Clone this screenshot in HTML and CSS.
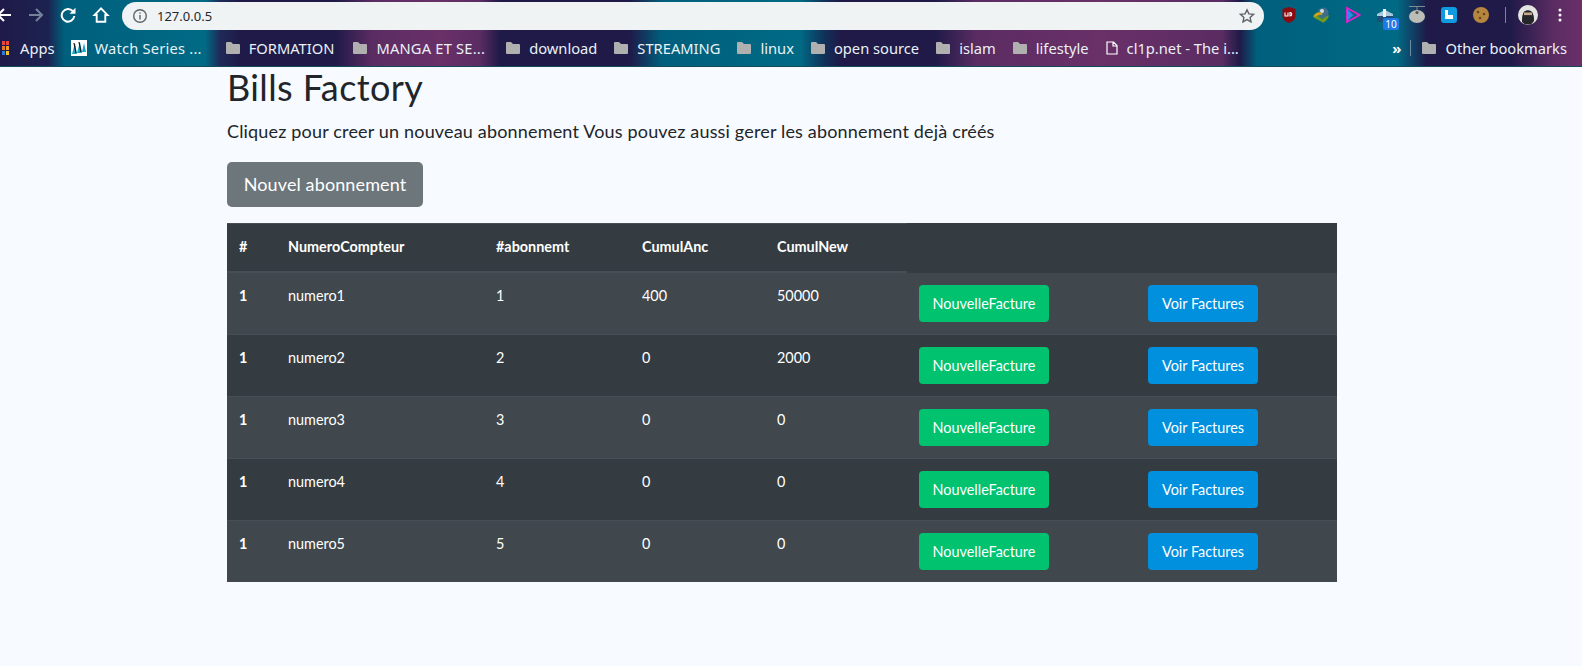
FILE: index.html
```html
<!DOCTYPE html>
<html lang="fr">
<head>
<meta charset="utf-8">
<title>Bills Factory</title>
<link rel="stylesheet" href="styles.css">
</head>
<body>
<svg class="defs" width="0" height="0"><symbol id="folder" viewBox="0 0 14 12"><path d="M1 0h4l2 2h6a1 1 0 0 1 1 1v8a1 1 0 0 1-1 1H1a1 1 0 0 1-1-1V1a1 1 0 0 1 1-1z" fill="#b0b0b0"/></symbol></svg>
<header class="chrome">
  <div class="toolbar">
    <svg class="nav nav-back" width="16" height="16" viewBox="0 0 16 16"><path d="M15 8H2M8 2 2 8l6 6" fill="none" stroke="#fff" stroke-width="2"/></svg>
    <svg class="nav nav-fwd" width="16" height="16" viewBox="0 0 16 16"><path d="M1 8h13M8 2l6 6-6 6" fill="none" stroke="#74839a" stroke-width="2"/></svg>
    <svg class="nav nav-reload" width="16" height="16" viewBox="0 0 16 16"><path d="M12.800 4.200A6.300 6.300 0 1 0 14.300 9" fill="none" stroke="#fff" stroke-width="2"/><path d="M9.500 6.800H15.500V0.800z" fill="#fff"/></svg>
    <svg class="nav nav-home" width="18" height="18" viewBox="0 0 18 18"><path d="M9 2.300 2.500 9H4.700V15.700H13.300V9H15.500Z" fill="none" stroke="#fff" stroke-width="1.900"/></svg>
    <div class="omnibox">
      <svg class="info" width="16" height="16" viewBox="0 0 16 16"><circle cx="8" cy="8" r="6.300" fill="none" stroke="#5f6368" stroke-width="1.400"/><path d="M7.300 7h1.400v4.500H7.300zM7.300 4.400h1.400v1.400H7.300z" fill="#5f6368"/></svg>
      <span class="url">127.0.0.5</span>
      <svg class="star" width="16" height="16" viewBox="0 0 16 16"><path d="m8 1.800 1.900 4.100 4.500.5-3.300 3 .9 4.400L8 11.600l-4 2.200.9-4.400-3.300-3 4.500-.5z" fill="none" stroke="#5f6368" stroke-width="1.400"/></svg>
    </div>
    <div class="extensions">
      <svg width="18" height="18" viewBox="0 0 18 18"><path d="M2.500 3 9 1l6.500 2v7c0 3.500-3.500 6-6.500 7-3-1-6.500-3.500-6.500-7z" fill="#8a0c10"/><path d="M5 6.500v3.500h3V6.500M10 6.500v3.500c2.300 0 2.300-3.500 0-3.500z" fill="none" stroke="#fff" stroke-width="1.100"/></svg>
      <svg width="18" height="18" viewBox="0 0 18 18"><circle cx="11" cy="7" r="5.500" fill="#3f6d8a"/><circle cx="10" cy="5" r="2" fill="#cfe0ea"/><path d="M1 11c1-5 7-6 10-3L6 10l4 3 7-4c-1 5-5 8-6.500 7.500C7.500 14.500 4 13 1 11z" fill="#6b9a1f"/><path d="M2.500 10.500c2-2.500 5-3.500 7.500-2.500" fill="none" stroke="#e8a020" stroke-width="1.800"/></svg>
      <svg width="18" height="18" viewBox="0 0 18 18"><path d="M3 2l12.500 7L3 16z" fill="none" stroke="#e81fd0" stroke-width="1.800"/><path d="M3 3v12l6.500-6z" fill="#2d8ae8"/></svg>
      <span class="ext-badge-wrap">
        <svg width="18" height="18" viewBox="0 0 18 18"><path d="M1 8 9 4l8 4v2H1z" fill="#a9c9dc"/><rect x="1" y="10" width="16" height="6" fill="#1f4f78"/><rect x="7" y="3" width="3" height="8" fill="#eef2f4"/></svg>
        <span class="ext-badge">10</span>
      </span>
      <svg width="18" height="18" viewBox="0 0 18 18"><path d="M1 0.500h16" stroke="#7f8c8f"/><path d="M9 0.500v5" stroke="#7f8c8f"/><ellipse cx="9" cy="10.500" rx="8" ry="6.500" fill="#bdbdb8"/><circle cx="9" cy="6.500" r="1.600" fill="#555"/></svg>
      <svg width="18" height="18" viewBox="0 0 18 18"><rect x="1" y="1" width="16" height="16" rx="3" fill="#0f9be0"/><path d="M5 4h3v5h5v4H5z" fill="#fff"/></svg>
      <svg width="18" height="18" viewBox="0 0 18 18"><circle cx="9" cy="9" r="8" fill="#b5863f"/><circle cx="6" cy="6" r="1.300" fill="#6c451b"/><circle cx="12" cy="8" r="1.300" fill="#6c451b"/><circle cx="8" cy="12" r="1.300" fill="#6c451b"/></svg>
    </div>
    <span class="vsep"></span>
    <svg class="avatar" width="20" height="20" viewBox="0 0 20 20"><circle cx="10" cy="10" r="10" fill="#e4e4e2"/><path d="M4 17c0-4 0-6 1-8 1-5 9-5 10 0 1 2 1 4 1 7l-3 3.500H7z" fill="#24262a"/><rect x="6" y="7.500" width="8" height="2.600" fill="#c9a88c"/></svg>
    <svg class="menu" width="4" height="14" viewBox="0 0 4 14"><circle cx="2" cy="2" r="1.500" fill="#fff"/><circle cx="2" cy="7" r="1.500" fill="#fff"/><circle cx="2" cy="12" r="1.500" fill="#fff"/></svg>
  </div>
  <nav class="bookmarks">
    <span class="apps"><i></i><i></i><i></i><i></i><i></i><i></i></span>
    <span class="bm bm-apps">Apps</span>
    <span class="bm bm-watch"><svg width="16" height="16" viewBox="0 0 16 16"><rect width="16" height="16" fill="#fff"/><path d="M1 14 4 3l2 11zM6 13l3-11 2 11zM11 12l2-9 2 9z" fill="#18a5c8"/><path d="M3 3l2 10M8 2l2 10" stroke="#111" stroke-width="1.200"/></svg>Watch Series ...</span>
    <span class="bm bm-first"><svg class="folder" width="14" height="12"><use href="#folder"/></svg>FORMATION</span>
    <span class="bm bm-manga"><svg class="folder" width="14" height="12"><use href="#folder"/></svg>MANGA ET SE...</span>
    <span class="bm bm-download"><svg class="folder" width="14" height="12"><use href="#folder"/></svg>download</span>
    <span class="bm"><svg class="folder" width="14" height="12"><use href="#folder"/></svg>STREAMING</span>
    <span class="bm"><svg class="folder" width="14" height="12"><use href="#folder"/></svg>linux</span>
    <span class="bm"><svg class="folder" width="14" height="12"><use href="#folder"/></svg>open source</span>
    <span class="bm"><svg class="folder" width="14" height="12"><use href="#folder"/></svg>islam</span>
    <span class="bm"><svg class="folder" width="14" height="12"><use href="#folder"/></svg>lifestyle</span>
    <span class="bm"><svg width="12" height="14" viewBox="0 0 12 14"><path d="M1 1h6.500L11 4.500V13H1zM7 1v4h4" fill="none" stroke="#fff" stroke-width="1.200"/></svg>cl1p.net - The i...</span>
    <span class="chev">»</span>
    <span class="vsep vsep-bm"></span>
    <span class="bm bm-other"><svg class="folder" width="14" height="12"><use href="#folder"/></svg>Other bookmarks</span>
  </nav>
</header>
<main class="container">
  <h1 class="title">Bills Factory</h1>
  <p class="lead">Cliquez pour creer un nouveau abonnement Vous pouvez aussi gerer les abonnement dejà créés</p>
  <a class="btn btn-lg btn-secondary">Nouvel abonnement</a>
  <table class="table">
    <thead>
      <tr><th class="c1">#</th><th class="c2">NumeroCompteur</th><th class="c3">#abonnemt</th><th class="c4">CumulAnc</th><th class="c5">CumulNew</th><th class="c6 noline"></th><th class="c7 noline"></th></tr>
    </thead>
    <tbody>
      <tr class="odd"><th>1</th><td>numero1</td><td>1</td><td>400</td><td>50000</td><td><a class="btn btn-green">NouvelleFacture</a></td><td><a class="btn btn-blue">Voir Factures</a></td></tr>
      <tr><th>1</th><td>numero2</td><td>2</td><td>0</td><td>2000</td><td><a class="btn btn-green">NouvelleFacture</a></td><td><a class="btn btn-blue">Voir Factures</a></td></tr>
      <tr class="odd"><th>1</th><td>numero3</td><td>3</td><td>0</td><td>0</td><td><a class="btn btn-green">NouvelleFacture</a></td><td><a class="btn btn-blue">Voir Factures</a></td></tr>
      <tr><th>1</th><td>numero4</td><td>4</td><td>0</td><td>0</td><td><a class="btn btn-green">NouvelleFacture</a></td><td><a class="btn btn-blue">Voir Factures</a></td></tr>
      <tr class="odd"><th>1</th><td>numero5</td><td>5</td><td>0</td><td>0</td><td><a class="btn btn-green">NouvelleFacture</a></td><td><a class="btn btn-blue">Voir Factures</a></td></tr>
    </tbody>
  </table>
</main>
</body>
</html>
```
FILE: styles.css
```css
* { box-sizing: border-box; }
html, body { margin: 0; height: 100%; overflow: hidden; }
body { background: #f7fafe; font-family: "Lato", "Noto Sans", sans-serif; color: #212529; }
.defs { position: absolute; }

.chrome {
  height: 67px;
  background: linear-gradient(90deg,
    #1f1a48 0, #1c2250 48px, #005f7c 64px, #006a85 205px, #1f2a58 220px, #1f1a48 240px,
    #1f1a48 335px, #5a2c62 372px, #6a3068 440px, #5a2c62 480px, #1f1a48 500px,
    #1f1a48 630px, #005f7c 662px, #006a85 800px, #103058 825px, #1f1a48 840px,
    #1f1a48 935px, #5a2c62 976px, #6a3068 1100px, #5a2c62 1222px, #1f1a48 1240px,
    #005f7c 1257px, #006a85 1397px, #1f1a48 1427px,
    #1f1a48 1510px, #5a2c62 1553px, #6a3068 1582px);
  color: #e9f2f7;
  font-family: "Noto Sans", sans-serif;
  border-bottom: 1px solid #0f4a5e;
}
.toolbar { height: 30px; display: flex; align-items: center; }
.nav { flex: none; }
.nav-back { margin-left: -4px; }
.nav-fwd { margin-left: 16px; }
.nav-reload { margin-left: 16px; }
.nav-home { margin-left: 16px; }
.omnibox {
  margin: 2px 0 0 12px;
  width: 1142px;
  height: 28px;
  background: #eff3f4;
  border-radius: 14px;
  display: flex;
  align-items: center;
  padding: 0 9px 0 10px;
  flex: none;
}
.info, .star { flex: none; }
.url { margin-left: 9px; font-size: 13px; color: #24292e; flex: 1; }
.extensions { display: flex; align-items: center; gap: 14px; margin-left: 16px; flex: none; }
.ext-badge-wrap { position: relative; display: flex; }
.ext-badge {
  position: absolute; left: 7px; top: 12px; width: 16px; height: 12px;
  background: #1f7ae6; color: #fff; font-size: 10px; line-height: 12px; text-align: center; border-radius: 2px;
}
.vsep { width: 1px; height: 16px; background: #6f8aa0; margin-left: 15px; flex: none; }
.avatar { margin-left: 12px; flex: none; }
.menu { margin-left: 20px; flex: none; }

.bookmarks { height: 35px; display: flex; align-items: center; font-size: 14.7px; white-space: nowrap; }
.apps { display: grid; grid-template-columns: repeat(2, 3px); grid-auto-rows: 4px; gap: 1px; margin-left: 2px; flex: none; }
.apps i { display: block; background: #e8453c; }
.apps i:nth-child(3) { background: #e8762c; }
.apps i:nth-child(4) { background: #f0a020; }
.apps i:nth-child(5) { background: #2c7be5; }
.apps i:nth-child(6) { background: #f4c020; }
.bm { display: inline-flex; align-items: center; gap: 9px; margin-left: 17px; flex: none; }
.bm-apps { margin-left: 11px; }
.bm-watch { margin-left: 16px; gap: 8px; letter-spacing: 0.2px; }
.bm-first { margin-left: 24px; }
.bm-manga { margin-left: 19px; letter-spacing: 0.2px; }
.bm-download { margin-left: 21px; }
.chev { margin-left: auto; font-size: 15px; color: #fff; font-weight: 700; }
.vsep-bm { margin-left: 9px; }
.bm-other { margin-left: 11px; margin-right: 15px; }

.container { width: 1110px; margin-left: 227px; }
.title { margin: -1px 0 0; font-size: 36px; font-weight: 400; line-height: 43px; letter-spacing: 0.39px; color: #212529; }
.lead { margin: 9px 0 0; font-size: 18px; line-height: 27px; font-weight: 400; letter-spacing: 0.17px; color: #212529; }
.btn { display: inline-block; color: #fff; text-align: center; border-radius: 4px; white-space: nowrap; }
.btn-lg { margin-top: 17px; background: #6c767b; font-size: 18px; line-height: 27px; letter-spacing: 0.12px; padding: 9px 0; border-radius: 5px; width: 196px; }
.btn-green { background: #00c26f; }
.btn-blue { background: #0090de; }

.table { margin-top: 16px; width: 1110px; border-collapse: collapse; background: #353c41; color: #fff; font-size: 14.4px; table-layout: fixed; }
.table th, .table td { padding: 11px 12px 12px; vertical-align: top; text-align: left; line-height: 23px; border-top: 1px solid #454d55; }
.table thead th { height: 48px; border-bottom: 2px solid #454d55; font-weight: 700; }
.table thead th.noline { border-top-color: #353c41; border-bottom-color: #353c41; }
.table tbody th { font-weight: 700; }
.table tbody tr { height: 62px; }
.table .odd { background: #40474d; }
.table td .btn { display: block; margin-top: 1px; font-size: 14.4px; line-height: 23px; padding: 7px 0; }
.table .btn-green { width: 130px; }
.table .btn-blue { width: 110px; }
.c1 { width: 49px; }
.c2 { width: 208px; }
.c3 { width: 146px; }
.c4 { width: 135px; }
.c5 { width: 142px; }
.c6 { width: 229px; }
.c7 { width: 201px; }
```
